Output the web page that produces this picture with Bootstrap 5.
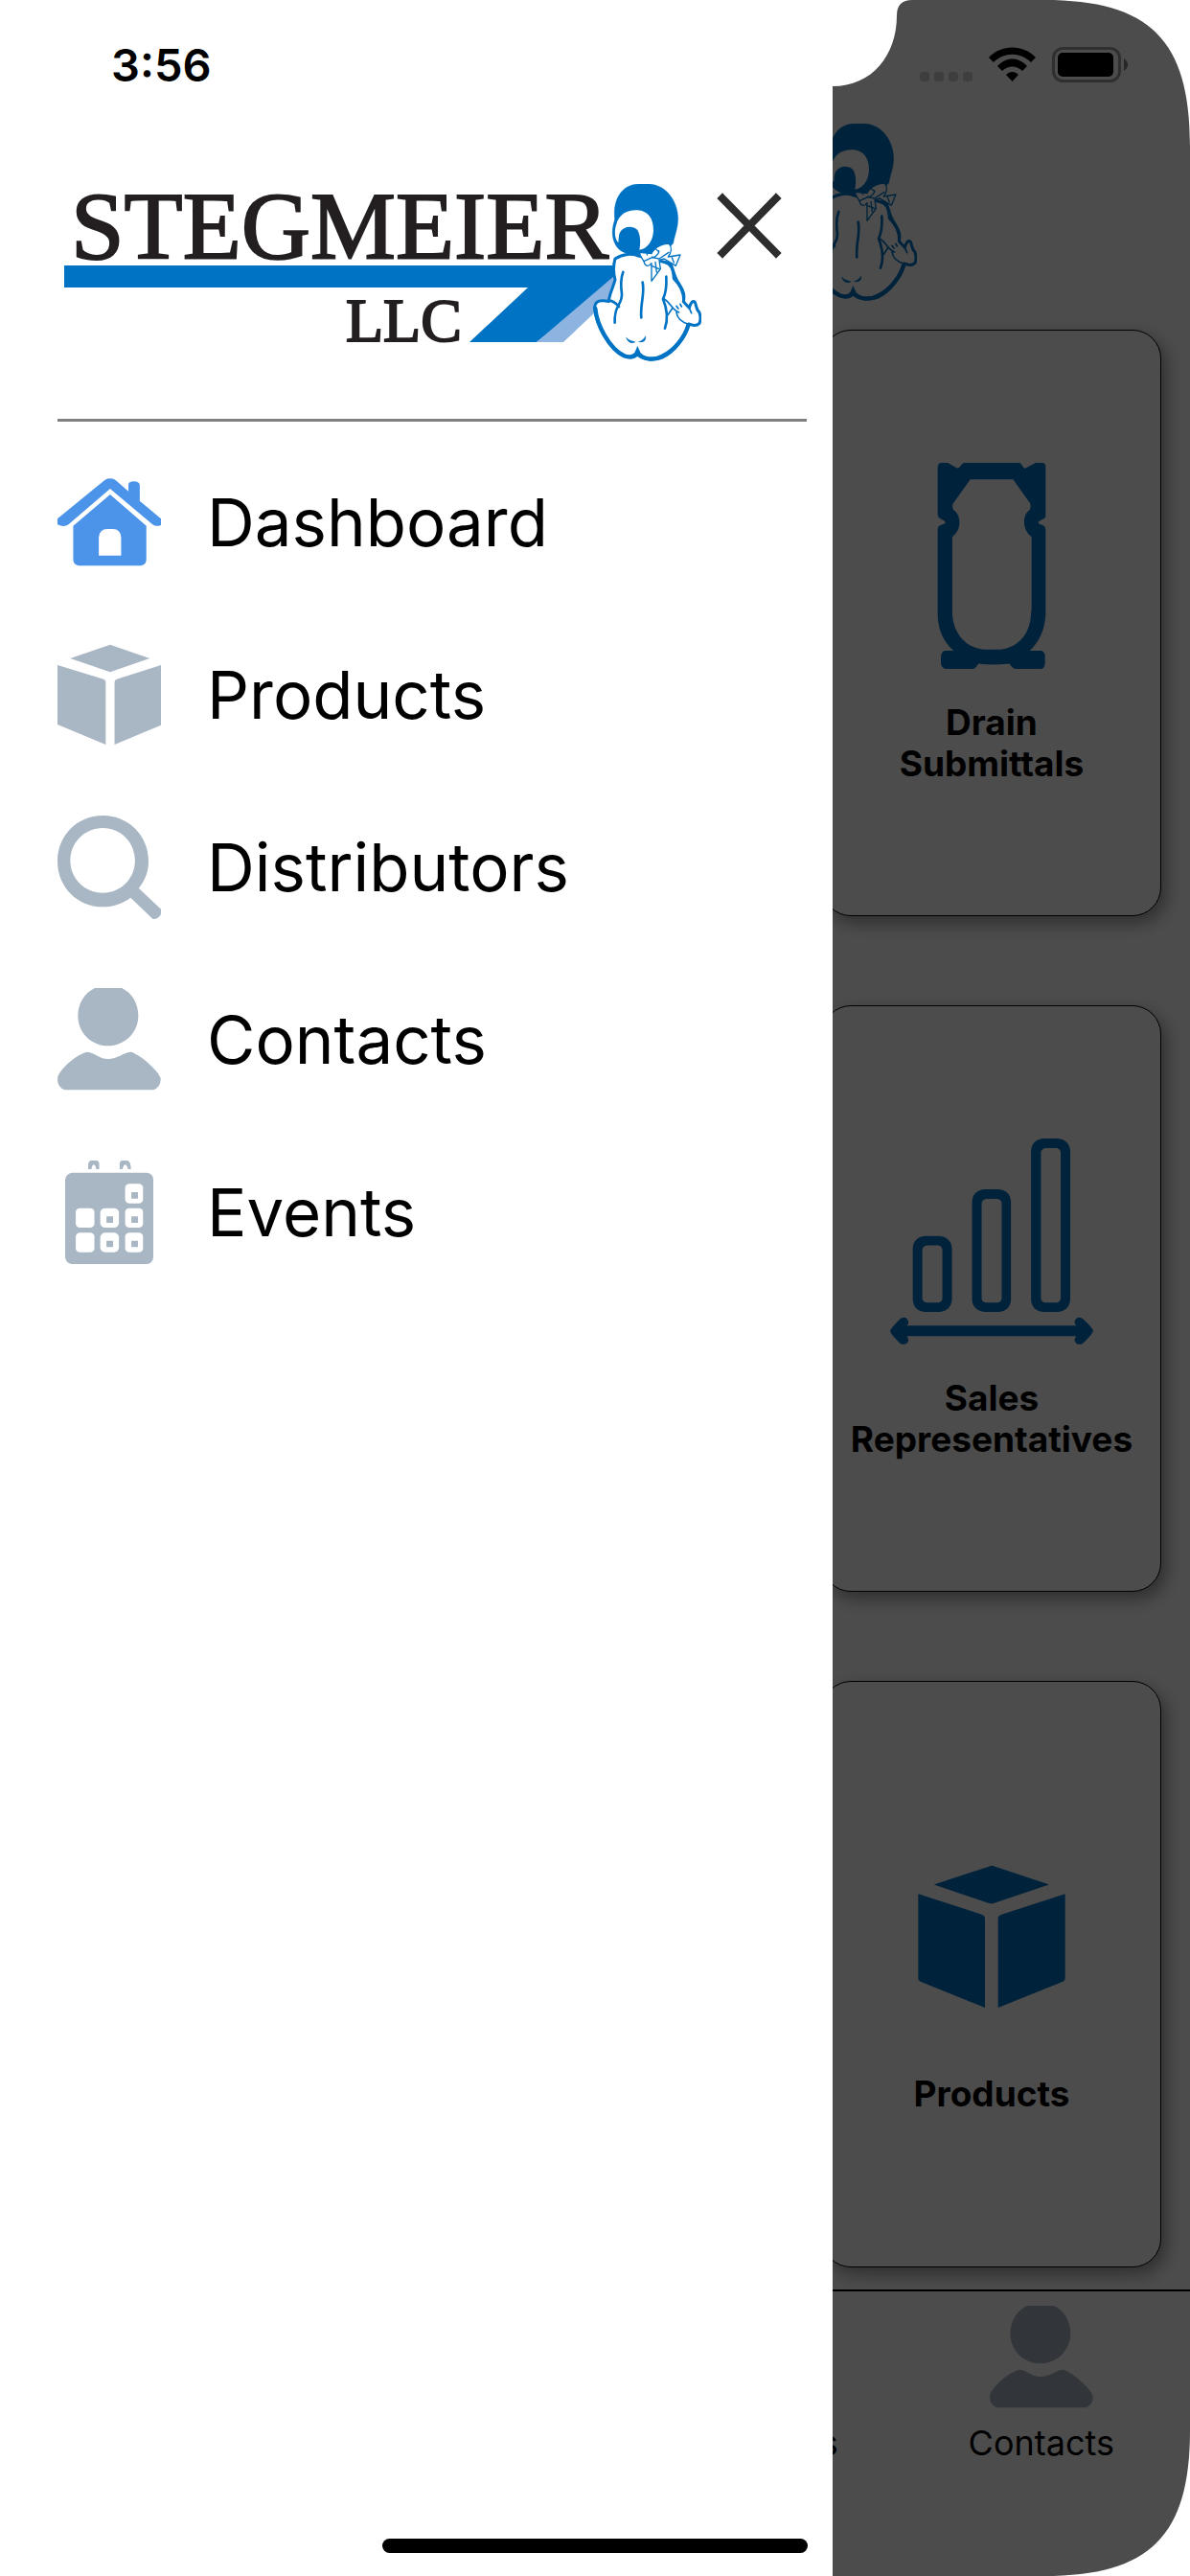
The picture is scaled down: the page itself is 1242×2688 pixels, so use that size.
<!DOCTYPE html>
<html lang="en">
<head>
<meta charset="utf-8">
<meta name="viewport" content="width=device-width, initial-scale=1">
<title>Stegmeier LLC</title>
<link href="https://cdn.jsdelivr.net/npm/bootstrap@5.3.0/dist/css/bootstrap.min.css" rel="stylesheet">
<style>
  body { font-family: Inter, "Liberation Sans", sans-serif; color: #000; background: #fff; }
  svg { display: block; flex: none; }
  .brand-logo { width: 672px; height: 185px; overflow: visible; }
  .page-head { padding: 129px 0 30px; }
  .tile-col { padding: 0 30px; gap: 93px; }
  .tile { height: 612px; border: 1px solid #000; border-radius: 30px; gap: 34px; box-shadow: 5px 7px 18px rgba(0,0,0,.4);
    font-size: 37px; line-height: 43px; font-weight: 700; color: #000; background: #fff; text-decoration: none; }
  .tile svg { width: 212px; height: 215px; fill: #0073c4; }
  .tab-strip { height: 299px; padding-top: 15px; border-top: 2px solid #000; background: #fff; }
  .tab-strip a { gap: 14px; font-size: 36px; line-height: 43px; color: #000; text-decoration: none; }
  .glyph { width: 108px; height: 108px; fill: #a9b6c4; }
  .glyph.current { fill: #4b94e9; }
  .dimmer { background: rgba(0,0,0,.7); z-index: 1040; }
  .bezel { z-index: 1041; pointer-events: none; fill: #fff; }
  .notch { width: 662px; height: 90px; }
  .corner { width: 152px; height: 152px; }
  .status-icons { top: 49px; right: 64px; gap: 17px; z-index: 1042; }
  .drawer { width: 70%; z-index: 1045; background: #fff; padding: 0 27px 0 60px; }
  .clock { height: 192px; padding: 38px 0 0 56px; font-size: 47px; line-height: 60px; font-weight: 600; }
  .drawer-head { padding-bottom: 60px; border-bottom: 3px solid #808080; }
  .close-btn { margin: 9px 0 0 16px; }
  .menu { padding-top: 15px; }
  .menu a { height: 180px; gap: 48px; font-size: 69px; line-height: 84px; color: #000; text-decoration: none; }
  .home-bar { width: 444px; height: 15px; border-radius: 8px; bottom: 24px; z-index: 1050; background: #000; }
</style>
</head>
<body class="min-vh-100 overflow-hidden">

<svg width="0" height="0" class="position-absolute" aria-hidden="true">
  <defs>
    <symbol id="logo-art" viewBox="60 192 672 185">
      <path fill="#0073c4" d="M67 277H643V292L560 357H490L551 300H67z"/>
      <path fill="#8db4e0" d="M560 357L641 288V307L588 357z"/>
      <g transform="translate(560 160) scale(.3333)" fill="none" stroke="#0073c4" stroke-linecap="round" stroke-linejoin="round">
        <path fill="#fff" stroke-width="9" d="M246 330C270 314 300 312 322 322L420 345C430 370 432 390 446 408C462 432 464 446 460 464L478 484C484 464 490 460 496 466C500 476 500 484 505 492C514 500 515 520 510 532C500 542 488 538 476 534C464 580 430 624 392 640C366 650 334 644 316 630C304 642 288 642 268 630C224 606 186 536 182 482C184 460 204 458 226 464C228 440 240 420 246 396C240 372 240 350 246 330z"/>
        <path stroke-width="13" d="M184 486C188 536 228 612 274 634C294 641 308 636 316 622C330 646 366 650 396 634C432 616 464 576 475 538"/>
        <path stroke-width="8" d="M226 460C240 462 250 470 258 480M271 372C262 395 264 420 267 440C269 474 242 474 245 530M332 404C340 440 324 470 328 514M406 386C408 420 404 440 396 456C410 490 412 520 402 548"/>
        <path stroke-width="5" d="M400 456C420 468 424 490 446 498M412 505L426 484M438 478L444 486M450 472L454 480M438 498C440 516 452 528 478 536M478 484L485 500"/>
        <path stroke-width="9" d="M400 340C420 345 428 360 430 392C450 412 462 436 461 462"/>
        <path fill="#0073c4" stroke-width="1" d="M281 577C288 586 300 588 309 590C300 598 284 592 281 577zM320 590C330 586 336 582 341 572C344 584 336 594 320 590zM309 622L316 604L324 622L316 632z"/>
        <path fill="#0073c4" stroke-width="1" d="M245 208C238 150 262 98 320 96H354C410 100 444 156 443 205C443 236 432 258 428 282C412 300 380 312 350 314C310 322 262 318 246 284C234 262 236 232 245 208z"/>
        <path fill="#fff" stroke="none" d="M250 222C258 190 286 176 316 178C350 180 366 206 366 240C366 274 346 300 322 302C326 282 326 256 316 240C300 224 272 228 262 246C256 256 258 268 256 280C242 262 244 240 250 222z"/>
        <path fill="#fff" stroke-width="4" d="M322 310L360 314C370 292 400 280 416 284C424 296 422 312 412 324L450 318L436 352L400 330L384 334L388 362L360 400V344C348 360 338 350 336 338C330 328 324 322 322 310z"/>
        <path stroke-width="4" d="M346 318C350 298 372 292 380 306C390 300 376 330 362 324M336 338L362 326L384 330L414 310M372 340L376 372M424 326L430 342M360 352L384 362"/>
      </g>
    </symbol>
    <symbol id="i-home" viewBox="52 93 283 324" preserveAspectRatio="none">
      <path d="M52 244L182 122Q196 114 210 122L246 158V136Q248 127 261 127Q275 127 277 138V188L335 244V264Q322 270 312 262L196 150L82 262Q70 272 52 262z"/>
      <path fill-rule="evenodd" d="M196 168L295 266V372Q294 390 278 391H112Q96 390 95 372V266zM165 359H226V302Q224 276 204 276H188Q167 276 165 302z"/>
    </symbol>
    <symbol id="i-box" viewBox="52 633 283 324" preserveAspectRatio="none">
      <path d="M196 638L304 681L196 724L87 681zM52 702L178 746Q184 749 184 756V951L52 888zM335 702L214 746Q208 749 208 756V951L335 890z"/>
    </symbol>
    <symbol id="i-search" viewBox="52 33 283 324" preserveAspectRatio="none">
      <path fill-rule="evenodd" d="M176 33C246 33 301 96 301 176C301 210 290 238 274 260L335 326V342Q326 360 312 356L252 290C230 308 206 319 176 319C106 319 52 256 52 176C52 96 106 33 176 33zM176 72C126 72 87 118 87 174C87 230 126 275 176 275C226 275 264 230 264 174C264 118 226 72 176 72z"/>
    </symbol>
    <symbol id="i-person" viewBox="52 573 283 324" preserveAspectRatio="none">
      <path d="M154 573H228C256 588 273 622 273 660C273 712 236 754 190 754C144 754 108 712 108 660C108 622 126 588 154 573zM132 773C152 773 166 795 190 795C216 795 234 773 254 773C282 784 326 830 334 854Q336 882 314 892H72Q48 882 53 850C64 820 104 782 132 773z"/>
    </symbol>
    <symbol id="i-calendar" viewBox="52 1113 283 324" preserveAspectRatio="none">
      <path d="M136 1140V1124Q138 1113 145 1113H158Q166 1114 166 1124V1140H158Q156 1126 151 1126Q146 1128 145 1140zM222 1140V1124Q222 1113 230 1113H243Q253 1116 253 1140H245Q242 1126 237 1126Q232 1128 230 1140zM92 1151H296Q314 1154 314 1172V1416Q312 1434 298 1437H90Q74 1432 73 1416V1172Q76 1154 92 1151z"/>
      <g fill="#fff"><rect x="237" y="1186" width="49" height="61" rx="12"/><rect x="102" y="1262" width="51" height="61" rx="12"/><rect x="169" y="1262" width="51" height="61" rx="14"/><rect x="237" y="1262" width="49" height="61" rx="12"/><rect x="102" y="1339" width="51" height="61" rx="12"/><rect x="169" y="1339" width="51" height="61" rx="14"/><rect x="237" y="1339" width="49" height="61" rx="12"/></g>
      <path d="M254 1212h18v20h-18zM186 1288h18v20h-18zM254 1288h18v20h-18zM186 1364h18v20h-18zM254 1364h18v20h-18z"/>
    </symbol>
  </defs>
</svg>

<main>
  <header class="page-head d-flex justify-content-center">
    <svg class="brand-logo" aria-hidden="true"><use href="#logo-art"/></svg>
  </header>
  <div class="row g-0">
    <div class="col-4 offset-8 tile-col d-flex flex-column">
      <a href="#" class="tile d-flex flex-column align-items-center justify-content-center text-center">
        <svg viewBox="263 361 636 510" preserveAspectRatio="none" aria-hidden="true"><path fill-rule="evenodd" d="M422 361H444L470 373Q478 376 482 370L492 361H670L678 369Q682 378 690 373L718 361H742Q750 363 750 371V490Q750 498 742 500L728 506Q726 509 730 512L743 516Q750 519 750 527V740C746 776 730 804 700 826H738Q748 830 748 840V858Q746 870 736 871H654Q644 868 636 858Q582 863 540 858Q532 868 524 871H436Q424 868 422 858V840Q424 828 434 826H462C430 804 414 776 412 740V527Q412 518 420 516L434 511Q438 508 432 504L418 498Q412 495 412 490V371Q414 361 422 361zM514 402L460 462Q456 470 462 478C486 490 488 526 458 544V735C462 790 510 823 566 823H598C654 823 702 790 704 735L706 722V544C676 526 676 490 700 478Q704 470 702 462L648 402z"/></svg>
        <span>Drain<br>Submittals</span>
      </a>
      <a href="#" class="tile d-flex flex-column align-items-center justify-content-center text-center">
        <svg viewBox="265 373 637 511" preserveAspectRatio="none" aria-hidden="true"><path fill-rule="evenodd" d="M374 615H420Q456 618 459 646V772Q456 800 420 803H374Q338 800 336 772V646Q338 618 374 615zM380 638Q366 640 366 650V768Q366 778 380 780H416Q429 778 429 768V650Q429 640 416 638zM560 499H606Q642 502 644 530V772Q642 800 606 803H560Q524 800 522 772V530Q524 502 560 499zM566 523Q552 525 552 535V768Q552 778 566 780H602Q615 778 615 768V535Q615 525 602 523zM745 373H791Q827 376 830 404V772Q827 800 791 803H745Q709 800 707 772V404Q709 376 745 373zM751 397Q738 399 738 409V768Q738 778 751 780H787Q800 778 800 768V409Q800 399 787 397z"/><path d="M265 850Q266 844 298 819Q318 812 323 830L318 837H848L843 829Q848 812 868 819Q900 842 902 850Q900 858 868 882Q848 888 843 872L848 863H318L323 872Q318 888 298 882Q266 858 265 850z"/></svg>
        <span>Sales<br>Representatives</span>
      </a>
      <a href="#" class="tile d-flex flex-column align-items-center justify-content-center text-center">
        <svg viewBox="263 435 636 511" preserveAspectRatio="none" aria-hidden="true"><path d="M400 560L572 515Q582 511 592 515L761 560L592 605Q580 609 568 605zM351 583L550 634Q560 637 560 644V865L356 800Q351 798 351 792zM811 583L612 634Q601 637 601 644V865L806 800Q811 798 811 792z"/></svg>
        <span>Products</span>
      </a>
    </div>
  </div>
</main>

<nav class="tab-strip fixed-bottom d-flex justify-content-end">
  <a href="#" class="w-25 d-flex flex-column align-items-center"><svg class="glyph" aria-hidden="true"><use href="#i-search"/></svg>Distributors</a>
  <a href="#" class="w-25 d-flex flex-column align-items-center"><svg class="glyph" aria-hidden="true"><use href="#i-person"/></svg>Contacts</a>
</nav>

<div class="dimmer position-fixed top-0 start-0 w-100 h-100"></div>
<svg class="bezel notch position-fixed top-0 start-50 translate-middle-x" viewBox="0 0 662 90" aria-hidden="true"><path d="M0 0H662Q646 0 646 16C646 58 620 90 579 90H83C42 90 16 58 16 16Q16 0 0 0z"/></svg>
<svg class="bezel corner position-fixed top-0 end-0" viewBox="0 0 152 152" aria-hidden="true"><path d="M0 0C110 0 152 42 152 152V0z"/></svg>
<svg class="bezel corner position-fixed bottom-0 end-0" viewBox="0 0 152 152" aria-hidden="true"><path d="M0 152C110 152 152 110 152 0V152z"/></svg>

<div class="status-icons position-fixed d-flex" aria-hidden="true">
  <svg width="56" height="37" fill="#3e3e3e"><rect x="1" y="26" width="10" height="10" rx="3"/><rect x="16" y="26" width="10" height="10" rx="3"/><rect x="31" y="26" width="10" height="10" rx="3"/><rect x="46" y="26" width="10" height="10" rx="3"/></svg>
  <svg width="49" height="37"><path d="M0 11C13-3 36-3 49 11L44 16C33 5 16 5 5 16zM9 20C18 10 31 10 40 20L35 25C29 19 20 19 14 25zM18 29C22 25 27 25 31 29L24.500 36z"/></svg>
  <svg width="80" height="37"><rect x="1.500" y="1.500" width="69" height="34" rx="10" fill="none" stroke="#2f2f2f" stroke-width="3"/><rect x="6" y="6" width="58" height="25" rx="5"/><path fill="#262626" d="M75 12Q79 15 79 18.500Q79 22 75 25z"/></svg>
</div>

<aside class="drawer position-fixed top-0 start-0 h-100">
  <div class="clock">3:56</div>
  <div class="drawer-head d-flex align-items-start">
    <svg class="brand-logo" viewBox="60 192 672 185" role="img" aria-label="Stegmeier LLC">
      <g fill="#231f20" stroke="#231f20" stroke-width="2" font-family="'Liberation Serif', serif"><text x="74" y="269" font-size="100">STEGMEIER</text><text x="361" y="356" font-size="64">LLC</text></g>
      <use href="#logo-art" x="60" y="192" width="672" height="185"/>
    </svg>
    <button type="button" class="close-btn btn p-0 border-0" aria-label="Close menu">
      <svg width="68" height="69" viewBox="0 0 68 69" stroke="#2d2d2d" stroke-width="8" stroke-linecap="square" aria-hidden="true"><path d="M6 6L62 63M62 6L6 63"/></svg>
    </button>
  </div>
  <nav class="menu d-flex flex-column">
    <a href="#" class="d-flex align-items-center"><svg class="glyph current" aria-hidden="true"><use href="#i-home"/></svg>Dashboard</a>
    <a href="#" class="d-flex align-items-center"><svg class="glyph" aria-hidden="true"><use href="#i-box"/></svg>Products</a>
    <a href="#" class="d-flex align-items-center"><svg class="glyph" aria-hidden="true"><use href="#i-search"/></svg>Distributors</a>
    <a href="#" class="d-flex align-items-center"><svg class="glyph" aria-hidden="true"><use href="#i-person"/></svg>Contacts</a>
    <a href="#" class="d-flex align-items-center"><svg class="glyph" aria-hidden="true"><use href="#i-calendar"/></svg>Events</a>
  </nav>
</aside>
<div class="home-bar position-fixed start-50 translate-middle-x"></div>

<script src="https://cdn.jsdelivr.net/npm/bootstrap@5.3.0/dist/js/bootstrap.bundle.min.js"></script>
</body>
</html>
